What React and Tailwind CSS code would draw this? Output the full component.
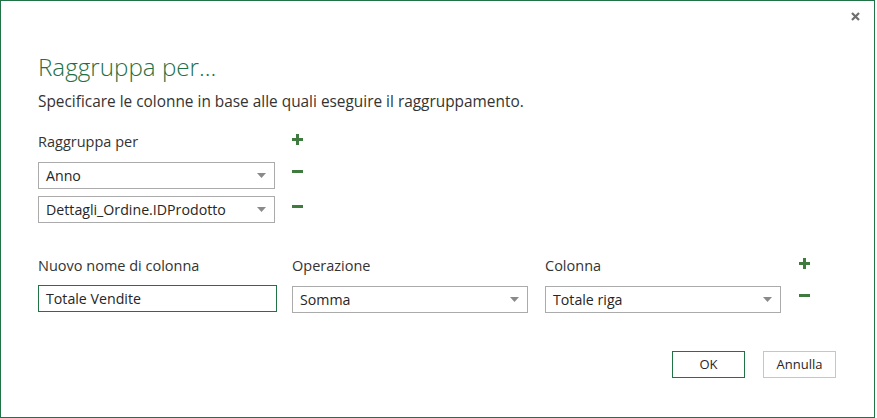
import React from 'react';

const font = { fontFamily: '"Open Sans", "Noto Sans", sans-serif' };

function Plus() {
  return (
    <svg width="11" height="11" viewBox="0 0 11 11">
      <rect x="0" y="4" width="11" height="3" fill="#3f7a3f" />
      <rect x="4" y="0" width="3" height="11" fill="#3f7a3f" />
    </svg>
  );
}

function Minus() {
  return (
    <svg width="11" height="3" viewBox="0 0 11 3">
      <rect x="0" y="0" width="11" height="3" fill="#3f7a3f" />
    </svg>
  );
}

function Arrow() {
  return (
    <svg width="9" height="5" viewBox="0 0 9 5">
      <path d="M0 0 L9 0 L4.5 5 Z" fill="#8a8a8a" />
    </svg>
  );
}

function Select({ value, width }) {
  return (
    <div className={`${width} h-[27px] flex items-center justify-between border border-[#ababab] bg-white pl-[7px] pr-[8px] text-[14.2px] text-[#262626]`}>
      <span>{value}</span>
      <Arrow />
    </div>
  );
}

export default function App() {
  return (
    <div className="bg-white w-[877px] h-[418px]" style={font}>
      <div className="w-[875px] h-[418px] border border-[#217346] flex flex-col">
        <div className="h-[31px] flex items-center justify-end pr-[14px]">
          <svg width="9" height="9" viewBox="0 0 9 9">
            <path d="M1 1 L8 8 M8 1 L1 8" stroke="#6f6f6f" strokeWidth="2.2" />
          </svg>
        </div>

        <div className="pl-[37px] pr-[37px]">
          <h1 className="mt-[19px] h-[32px] leading-[32px] text-[24.2px] font-light text-[#1e7145]">
            Raggruppa per...
          </h1>
          <p className="mt-[9px] h-[20px] leading-[20px] text-[15.4px] text-[#333333]">
            Specificare le colonne in base alle quali eseguire il raggruppamento.
          </p>

          <div className="mt-[20px] flex">
            <div className="w-[237px] flex flex-col">
              <div className="h-[20px] leading-[20px] text-[14.5px] text-[#333333]">Raggruppa per</div>
              <div className="mt-[10px] flex flex-col gap-[7px]">
                <Select value="Anno" width="w-[237px]" />
                <Select value="Dettagli_Ordine.IDProdotto" width="w-[237px]" />
              </div>
            </div>
            <div className="ml-[17px] flex flex-col">
              <div className="h-[20px] flex items-center -mt-[3px]"><Plus /></div>
              <div className="mt-[13px] h-[27px] flex items-center -translate-y-[4px]"><Minus /></div>
              <div className="mt-[7px] h-[27px] flex items-center -translate-y-[3px]"><Minus /></div>
            </div>
          </div>

          <div className="mt-[33px] flex">
            <div className="w-[239px] flex flex-col">
              <div className="h-[20px] leading-[20px] text-[14.5px] text-[#333333]">Nuovo nome di colonna</div>
              <div className="mt-[9px] w-[239px] h-[27px] flex items-center border border-[#217346] pl-[7px] text-[14.2px] text-[#262626]">
                Totale Vendite
              </div>
            </div>
            <div className="ml-[15px] w-[236px] flex flex-col">
              <div className="h-[20px] leading-[20px] text-[14.5px] text-[#333333]">Operazione</div>
              <div className="mt-[10px]">
                <Select value="Somma" width="w-[236px]" />
              </div>
            </div>
            <div className="ml-[17px] w-[236px] flex flex-col">
              <div className="h-[20px] leading-[20px] text-[14.5px] text-[#333333]">Colonna</div>
              <div className="mt-[10px]">
                <Select value="Totale riga" width="w-[236px]" />
              </div>
            </div>
            <div className="ml-[18px] flex flex-col">
              <div className="h-[20px] flex items-center -mt-[3px]"><Plus /></div>
              <div className="mt-[13px] h-[27px] flex items-center -translate-y-[4px]"><Minus /></div>
            </div>
          </div>

          <div className="mt-[38px] flex justify-end gap-[18px] pr-[1px]">
            <button className="w-[73px] h-[27px] border border-[#217346] bg-white text-[13px] text-[#262626]">OK</button>
            <button className="w-[73px] h-[27px] border border-[#c6c6c6] bg-white text-[13px] text-[#262626]">Annulla</button>
          </div>
        </div>
      </div>
    </div>
  );
}
